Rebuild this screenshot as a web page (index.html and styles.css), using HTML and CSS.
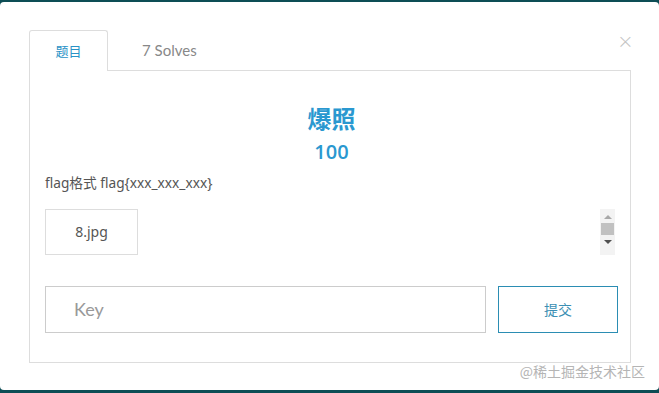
FILE: index.html
```html
<!DOCTYPE html>
<html lang="zh">
<head>
<meta charset="utf-8">
<link rel="stylesheet" href="styles.css">
</head>
<body>
<div class="modal">
  <span class="close">×</span>
  <div class="tabs">
    <div class="tab active">题目</div>
    <div class="tab">7 Solves</div>
  </div>
  <div class="panel">
    <h1 class="title">爆照</h1>
    <div class="points">100</div>
    <p class="desc">flag格式 flag{xxx_xxx_xxx}</p>
    <div class="files">
      <div class="file">8.jpg</div>
      <div class="scroll">
        <span class="arrow up"></span>
        <span class="thumb"></span>
        <span class="arrow down"></span>
      </div>
    </div>
    <div class="form">
      <div class="input">Key</div>
      <div class="submit">提交</div>
    </div>
  </div>
  <div class="watermark">@稀土掘金技术社区</div>
</div>
</body>
</html>
```
FILE: styles.css
```css
html, body {
  margin: 0;
  padding: 0;
}
body {
  width: 659px;
  height: 393px;
  background: #0d4d55;
  overflow: hidden;
  font-family: Lato, "Noto Sans CJK SC", sans-serif;
}
.modal {
  position: relative;
  margin-top: 2px;
  height: 388px;
  background: #fff;
  border-radius: 4px;
  padding: 28px 28px 0 29px;
  box-sizing: border-box;
}
.close {
  position: absolute;
  left: 617px;
  top: 29px;
  font-size: 20px;
  line-height: 20px;
  color: #c4c4c4;
  font-family: "DejaVu Sans", sans-serif;
  font-weight: 300;
}
.tabs {
  display: flex;
  height: 40px;
  border-bottom: 1px solid #dddddd;
}
.tab {
  height: 40px;
  line-height: 40px;
  font-size: 15px;
  color: #888;
  padding-left: 34px;
}
.tab.active {
  width: 79px;
  box-sizing: border-box;
  padding: 0;
  text-align: center;
  height: 41px;
  background: #fff;
  border: 1px solid #dddddd;
  border-bottom: none;
  border-radius: 3px 3px 0 0;
  color: #2a92c6;
  font-size: 13px;
  font-family: "Noto Sans CJK SC", sans-serif;
}
.panel {
  height: 292px;
  box-sizing: border-box;
  border: 1px solid #dddddd;
  border-top: none;
  padding: 32px 12px 0 15px;
}
.title {
  margin: 0;
  text-align: center;
  font-size: 24px;
  line-height: 30px;
  font-weight: 700;
  color: #2a98d0;
  font-family: "Noto Sans CJK SC", sans-serif;
}
.points {
  margin-top: 7px;
  text-align: center;
  font-size: 20px;
  line-height: 24px;
  font-weight: 600;
  color: #2a98d0;
  font-family: "Open Sans", sans-serif;
}
.desc {
  margin: 9px 0 0 0;
  font-size: 13.7px;
  line-height: 20px;
  color: #555;
  font-family: "Noto Sans", "Noto Sans CJK SC", sans-serif;
}
.files {
  margin-top: 16px;
  display: flex;
  justify-content: space-between;
  align-items: flex-start;
}
.file {
  width: 93px;
  height: 46px;
  box-sizing: border-box;
  border: 1px solid #dddddd;
  text-align: center;
  line-height: 44px;
  font-size: 14px;
  color: #555;
  font-family: "Noto Sans", sans-serif;
}
.scroll {
  width: 15px;
  height: 46px;
  margin-right: 3px;
  background: #f3f3f3;
  display: flex;
  flex-direction: column;
  align-items: center;
  padding-top: 6px;
  box-sizing: border-box;
}
.arrow {
  width: 0;
  height: 0;
  border-left: 4px solid transparent;
  border-right: 4px solid transparent;
}
.arrow.up {
  border-bottom: 4px solid #a8a8a8;
}
.arrow.down {
  border-top: 4px solid #505050;
  margin-top: 5px;
}
.thumb {
  width: 13px;
  height: 12px;
  background: #c1c1c1;
  margin-top: 4px;
}
.form {
  margin-top: 31px;
  display: flex;
  gap: 12px;
}
.input {
  width: 441px;
  height: 47px;
  flex: none;
  box-sizing: border-box;
  border: 1px solid #cccccc;
  padding-left: 28px;
  line-height: 45px;
  font-size: 18px;
  color: #999;
}
.submit {
  width: 120px;
  height: 47px;
  flex: none;
  box-sizing: border-box;
  border: 1px solid #2b8db3;
  text-align: center;
  line-height: 45px;
  font-size: 14px;
  color: #3b8fb3;
  font-family: "Noto Sans CJK SC", sans-serif;
}
.watermark {
  position: absolute;
  right: 14px;
  top: 359px;
  font-size: 14px;
  line-height: 20px;
  color: #b5b5b5;
  font-family: "Noto Sans CJK SC", sans-serif;
}
```
